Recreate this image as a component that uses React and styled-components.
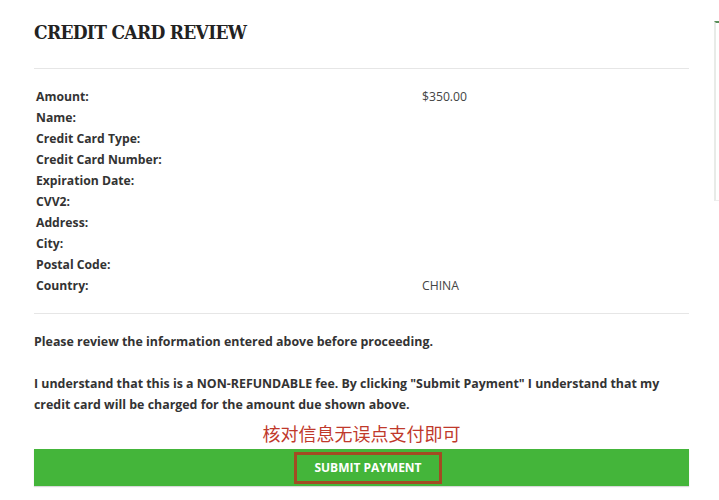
import styled, { createGlobalStyle } from 'styled-components';

const GlobalStyle = createGlobalStyle`
  html, body {
    margin: 0;
    padding: 0;
    background: #ffffff;
  }
  body {
    font-family: 'Open Sans', 'Noto Sans', sans-serif;
    color: #333333;
  }
`;

const Page = styled.div`
  display: flex;
  align-items: flex-start;
  padding: 20px 0 0 34px;
  width: 719px;
  height: 500px;
  box-sizing: border-box;
  overflow: hidden;
`;

const Main = styled.div`
  width: 655px;
  flex-shrink: 0;
`;

const Sidebar = styled.aside`
  margin-left: 25px;
  margin-top: 1px;
  width: 20px;
  height: 177px;
  border-left: 2px solid #e8ebe8;
  border-top: 2px solid #5a8f5a;
  border-bottom: 1px solid #eeeeee;
`;

const Title = styled.h1`
  margin: 0;
  font-family: 'DejaVu Serif Condensed', 'DejaVu Serif', 'Liberation Serif', serif;
  font-stretch: condensed;
  font-weight: 700;
  font-size: 19px;
  letter-spacing: -0.7px;
  line-height: 24px;
  color: #222222;
`;

const Rule = styled.hr`
  border: 0;
  border-top: 1px solid #e6e6e6;
  margin: ${(p) => p.$margin};
`;

const Details = styled.dl`
  display: grid;
  grid-template-columns: 386px 1fr;
  margin: 0;
  padding-left: 2px;
  font-size: 12.2px;
  line-height: 21px;
`;

const Label = styled.dt`
  font-weight: 700;
  color: #333333;
`;

const Value = styled.dd`
  margin: 0;
  color: #444444;
`;

const Note = styled.p`
  margin: 0 0 21px;
  font-size: 12.4px;
  line-height: 21px;
  font-weight: 700;
  color: #333333;
`;

const Hint = styled.div`
  text-align: center;
  margin: -15px 0 4px 0;
  font-family: 'Noto Sans CJK SC', sans-serif;
  font-size: 18px;
  line-height: 24px;
  color: #c0392b;
`;

const Bar = styled.div`
  display: flex;
  justify-content: center;
  align-items: center;
  height: 37px;
  background: #44b53a;
  box-shadow: 0 1px 1px rgba(0, 0, 0, 0.15);
`;

const Submit = styled.button`
  width: 148px;
  height: 32px;
  margin-left: 13px;
  border: 3px solid #a34a22;
  background: transparent;
  color: #ffffff;
  font-family: 'Open Sans', sans-serif;
  font-weight: 700;
  font-size: 12px;
  cursor: pointer;
`;

const rows = [
  ['Amount:', '$350.00'],
  ['Name:', ''],
  ['Credit Card Type:', ''],
  ['Credit Card Number:', ''],
  ['Expiration Date:', ''],
  ['CVV2:', ''],
  ['Address:', ''],
  ['City:', ''],
  ['Postal Code:', ''],
  ['Country:', 'CHINA'],
];

export default function App() {
  return (
    <>
      <GlobalStyle />
      <Page>
        <Main>
          <Title>CREDIT CARD REVIEW</Title>
          <Rule $margin="24px 0 17px" />
          <Details>
            {rows.map(([label, value]) => [
              <Label key={label + '-l'}>{label}</Label>,
              <Value key={label + '-v'}>{value || '\u00a0'}</Value>,
            ])}
          </Details>
          <Rule $margin="17px 0 17px" />
          <Note>Please review the information entered above before proceeding.</Note>
          <Note>
            I understand that this is a NON-REFUNDABLE fee. By clicking "Submit Payment" I understand that my
            credit card will be charged for the amount due shown above.
          </Note>
          <Hint>核对信息无误点支付即可</Hint>
          <Bar>
            <Submit type="button">SUBMIT PAYMENT</Submit>
          </Bar>
        </Main>
        <Sidebar />
      </Page>
    </>
  );
}
